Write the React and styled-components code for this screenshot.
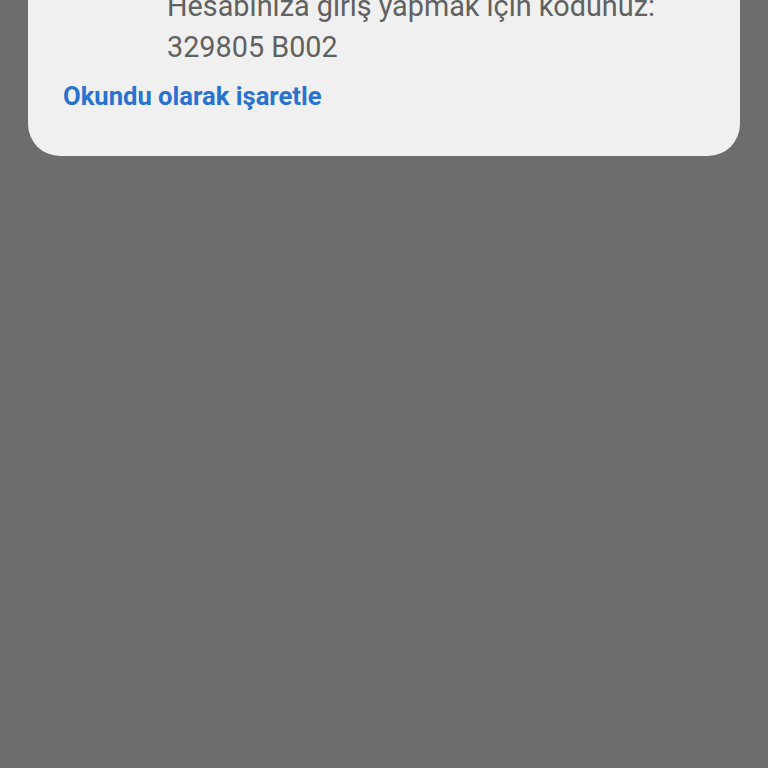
import React from "react";
import styled, { createGlobalStyle } from "styled-components";

const Global = createGlobalStyle`
  html, body { margin: 0; padding: 0; background: #6d6d6d; }
  body { font-family: Roboto, "Noto Sans", sans-serif; }
`;

const Screen = styled.div`
  width: 768px;
  height: 768px;
  overflow: hidden;
  background: #6d6d6d;
`;

const Card = styled.div`
  margin: -14px 28px 0 28px;
  background: #f0f0f0;
  border-radius: 0 0 32px 32px;
  padding: 0 35px 44px 35px;
  display: flex;
  flex-direction: column;
`;

const Message = styled.div`
  padding-left: 104px;
  font-size: 28.8px;
  line-height: 41px;
  color: #616161;
`;

const Action = styled.button`
  align-self: flex-start;
  background: none;
  border: 0;
  padding: 0;
  margin-top: 12px;
  font-family: Roboto, sans-serif;
  font-weight: 700;
  font-size: 25.6px;
  line-height: 32px;
  color: #2a72cf;
`;

export default function App() {
  return (
    <>
      <Global />
      <Screen>
        <Card>
          <Message>
            Hesabınıza giriş yapmak için kodunuz:
            <br />
            329805 B002
          </Message>
          <Action>Okundu olarak işaretle</Action>
        </Card>
      </Screen>
    </>
  );
}
